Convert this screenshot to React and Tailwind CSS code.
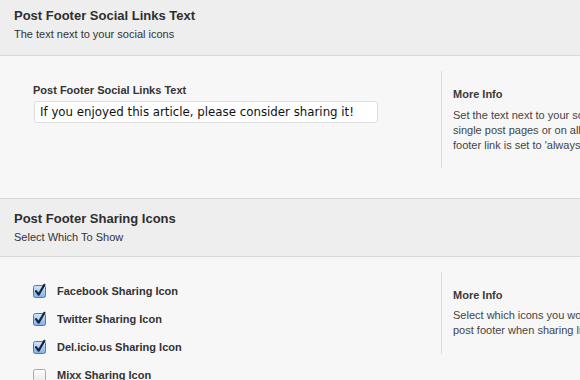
import React from "react";

function Checkbox({ checked }) {
  return (
    <svg width="14" height="14" viewBox="0 0 14 14" className="overflow-visible shrink-0">
      <defs>
        <linearGradient id="cbOn" x1="0" y1="0" x2="0" y2="1">
          <stop offset="0" stopColor="#d6e7fa" />
          <stop offset="1" stopColor="#7fb0e6" />
        </linearGradient>
        <linearGradient id="cbOff" x1="0" y1="0" x2="0" y2="1">
          <stop offset="0" stopColor="#ffffff" />
          <stop offset="1" stopColor="#e9e9e9" />
        </linearGradient>
      </defs>
      <rect
        x="0.5"
        y="1.5"
        width="12"
        height="12"
        rx="2"
        fill={checked ? "url(#cbOn)" : "url(#cbOff)"}
        stroke={checked ? "#4a78b8" : "#a8a8a8"}
      />
      {checked && (
        <path
          d="M3 7.2 L5.6 10.6 L11.4 0.8"
          fill="none"
          stroke="#15233f"
          strokeWidth="2.2"
          strokeLinecap="round"
          strokeLinejoin="round"
        />
      )}
    </svg>
  );
}

function SectionHeader({ title, sub, className }) {
  return (
    <div className={"bg-[#eeeeee] border-[#d9d9d9] px-[14px] " + className}>
      <div className="text-[13px] leading-[16px] font-bold text-[#2e2e2e]">{title}</div>
      <div className="mt-[3px] text-[11px] leading-[14px] text-[#333]">{sub}</div>
    </div>
  );
}

export default function App() {
  const icons = [
    ["Facebook Sharing Icon", true],
    ["Twitter Sharing Icon", true],
    ["Del.icio.us Sharing Icon", true],
    ["Mixx Sharing Icon", false],
  ];

  return (
    <div className="w-[580px] h-[380px] overflow-hidden bg-[#f7f7f7] font-['Liberation_Sans',Arial,sans-serif] text-[#333]">
      {/* SECTION 1 HEADER */}
      <SectionHeader
        title="Post Footer Social Links Text"
        sub="The text next to your social icons"
        className="h-[56px] pt-[8px] border-b"
      />

      {/* SECTION 1 BODY */}
      <div className="h-[142px] flex">
        <div className="w-[441px] shrink-0 pl-[33px] pt-[27px]">
          <div className="text-[11px] leading-[14px] font-bold text-[#333]">Post Footer Social Links Text</div>
          <input
            readOnly
            value="If you enjoyed this article, please consider sharing it!"
            className="mt-[4px] ml-px w-[344px] h-[22px] px-[5px] bg-white border border-[#dedede] rounded-[3px] text-[11.8px] font-['DejaVu_Sans',sans-serif] text-[#111] outline-none"
          />
        </div>
        <div className="mt-[15px] h-[97px] border-l border-[#dddddd] pl-[11px] pt-[16px] whitespace-nowrap">
          <div className="text-[11px] leading-[14px] font-bold text-[#3a3a3a]">More Info</div>
          <div className="mt-[7px] text-[11px] leading-[15px] text-[#444]">
            <div>Set the text next to your social icons. This appears on</div>
            <div>single post pages or on all pages if the post</div>
            <div>footer link is set to 'always show'.</div>
          </div>
        </div>
      </div>

      {/* SECTION 2 HEADER */}
      <SectionHeader
        title="Post Footer Sharing Icons"
        sub="Select Which To Show"
        className="h-[59px] pt-[12px] border-t border-b"
      />

      {/* SECTION 2 BODY */}
      <div className="flex">
        <div className="w-[441px] shrink-0 pl-[33px] pt-[27px] flex flex-col gap-[14px]">
          {icons.map(([label, on]) => (
            <label key={label} className="flex items-center gap-[10px] h-[14px]">
              <Checkbox checked={on} />
              <span className="text-[11px] leading-[14px] font-bold text-[#333]">{label}</span>
            </label>
          ))}
        </div>
        <div className="mt-[15px] h-[82px] border-l border-[#dddddd] pl-[11px] pt-[16px] whitespace-nowrap">
          <div className="text-[11px] leading-[14px] font-bold text-[#3a3a3a]">More Info</div>
          <div className="mt-[6px] text-[11px] leading-[15px] text-[#444]">
            <div>Select which icons you would like to show in the</div>
            <div>post footer when sharing links are enabled.</div>
          </div>
        </div>
      </div>
    </div>
  );
}
